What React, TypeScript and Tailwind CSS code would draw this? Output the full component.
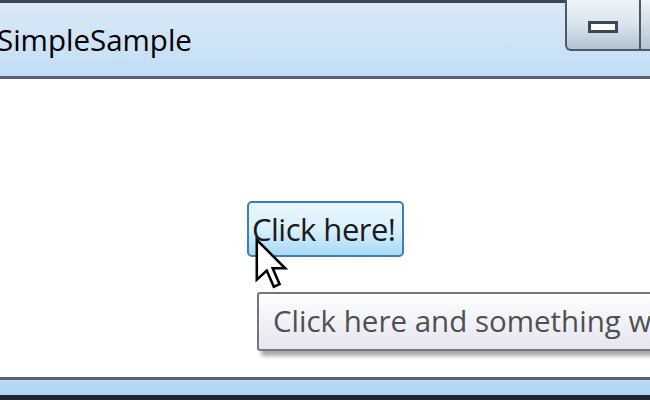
import React from "react";

function Cursor() {
	return (
		<svg width="36" height="54" viewBox="0 0 12 19" className="absolute left-[253px] top-[158px]">
			<path
				d="M1 1 L1 15 L4.5 11.8 L7 17.5 L9 16.6 L6.6 11 L11 11 Z"
				fill="#fff"
				stroke="#000"
				strokeWidth="0.9"
				strokeLinejoin="miter"
			/>
		</svg>
	);
}

export default function App() {
	return (
		<div className="w-[650px] h-[400px] overflow-hidden flex flex-col bg-white font-['Open_Sans','Noto_Sans',sans-serif]">
			<div className="h-[3px] bg-[#3c4652]" />
			<div className="h-[73px] flex items-start bg-gradient-to-b from-[#dbe9f7] to-[#c2ddf5]">
				<h1 className="-ml-[3px] mt-[17px] text-[29.5px] leading-[40px] text-black">
					SimpleSample
				</h1>
				<div className="ml-auto flex -mt-[3px]">
					<div className="w-[76px] h-[51px] border-x-2 border-b-2 border-[#4e5966] rounded-bl-[6px] bg-gradient-to-b from-[#eef4fa] via-[#d9e4ef] to-[#b3c3d3] flex items-center justify-center pt-[5px]">
						<div className="w-[30px] h-[12px] bg-white border-[3px] border-[#3e4854]" />
					</div>
					<div className="w-[9px] h-[51px] border-b-2 border-[#4e5966] bg-gradient-to-b from-[#eef4fa] to-[#b3c3d3]" />
				</div>
			</div>
			<div className="h-[3px] bg-[#58626e]" />
			<div className="relative flex-1 bg-white">
				<div className="pt-[122px] pl-[247px]">
					<button className="w-[157px] h-[56px] rounded-[5px] border-2 border-[#3c7fb1] bg-gradient-to-b from-[#eaf6fd] via-[#d9f0fc] to-[#a7d9f5] text-[31px] leading-[50px] tracking-[-0.5px] text-[#1a1a1a] text-left pl-[3px] whitespace-nowrap">
						Click here!
					</button>
				</div>
				<Cursor />
				<div className="absolute left-[257px] top-[213px] w-[420px] h-[59px] rounded-[3px] border-2 border-[#767676] bg-gradient-to-b from-white to-[#e4e5f0] shadow-[4px_5px_4px_rgba(0,0,0,0.35)] pl-[14px] text-[29.5px] leading-[54px] text-[#505050] whitespace-nowrap overflow-hidden">
					Click here and something will happen
				</div>
			</div>
			<div className="h-[3px] bg-[#5a6470]" />
			<div className="h-[2px] bg-[#c8d8e8]" />
			<div className="h-[13px] bg-[#b5d7f7]" />
			<div className="h-[5px] bg-[#1e2630]" />
		</div>
	);
}
